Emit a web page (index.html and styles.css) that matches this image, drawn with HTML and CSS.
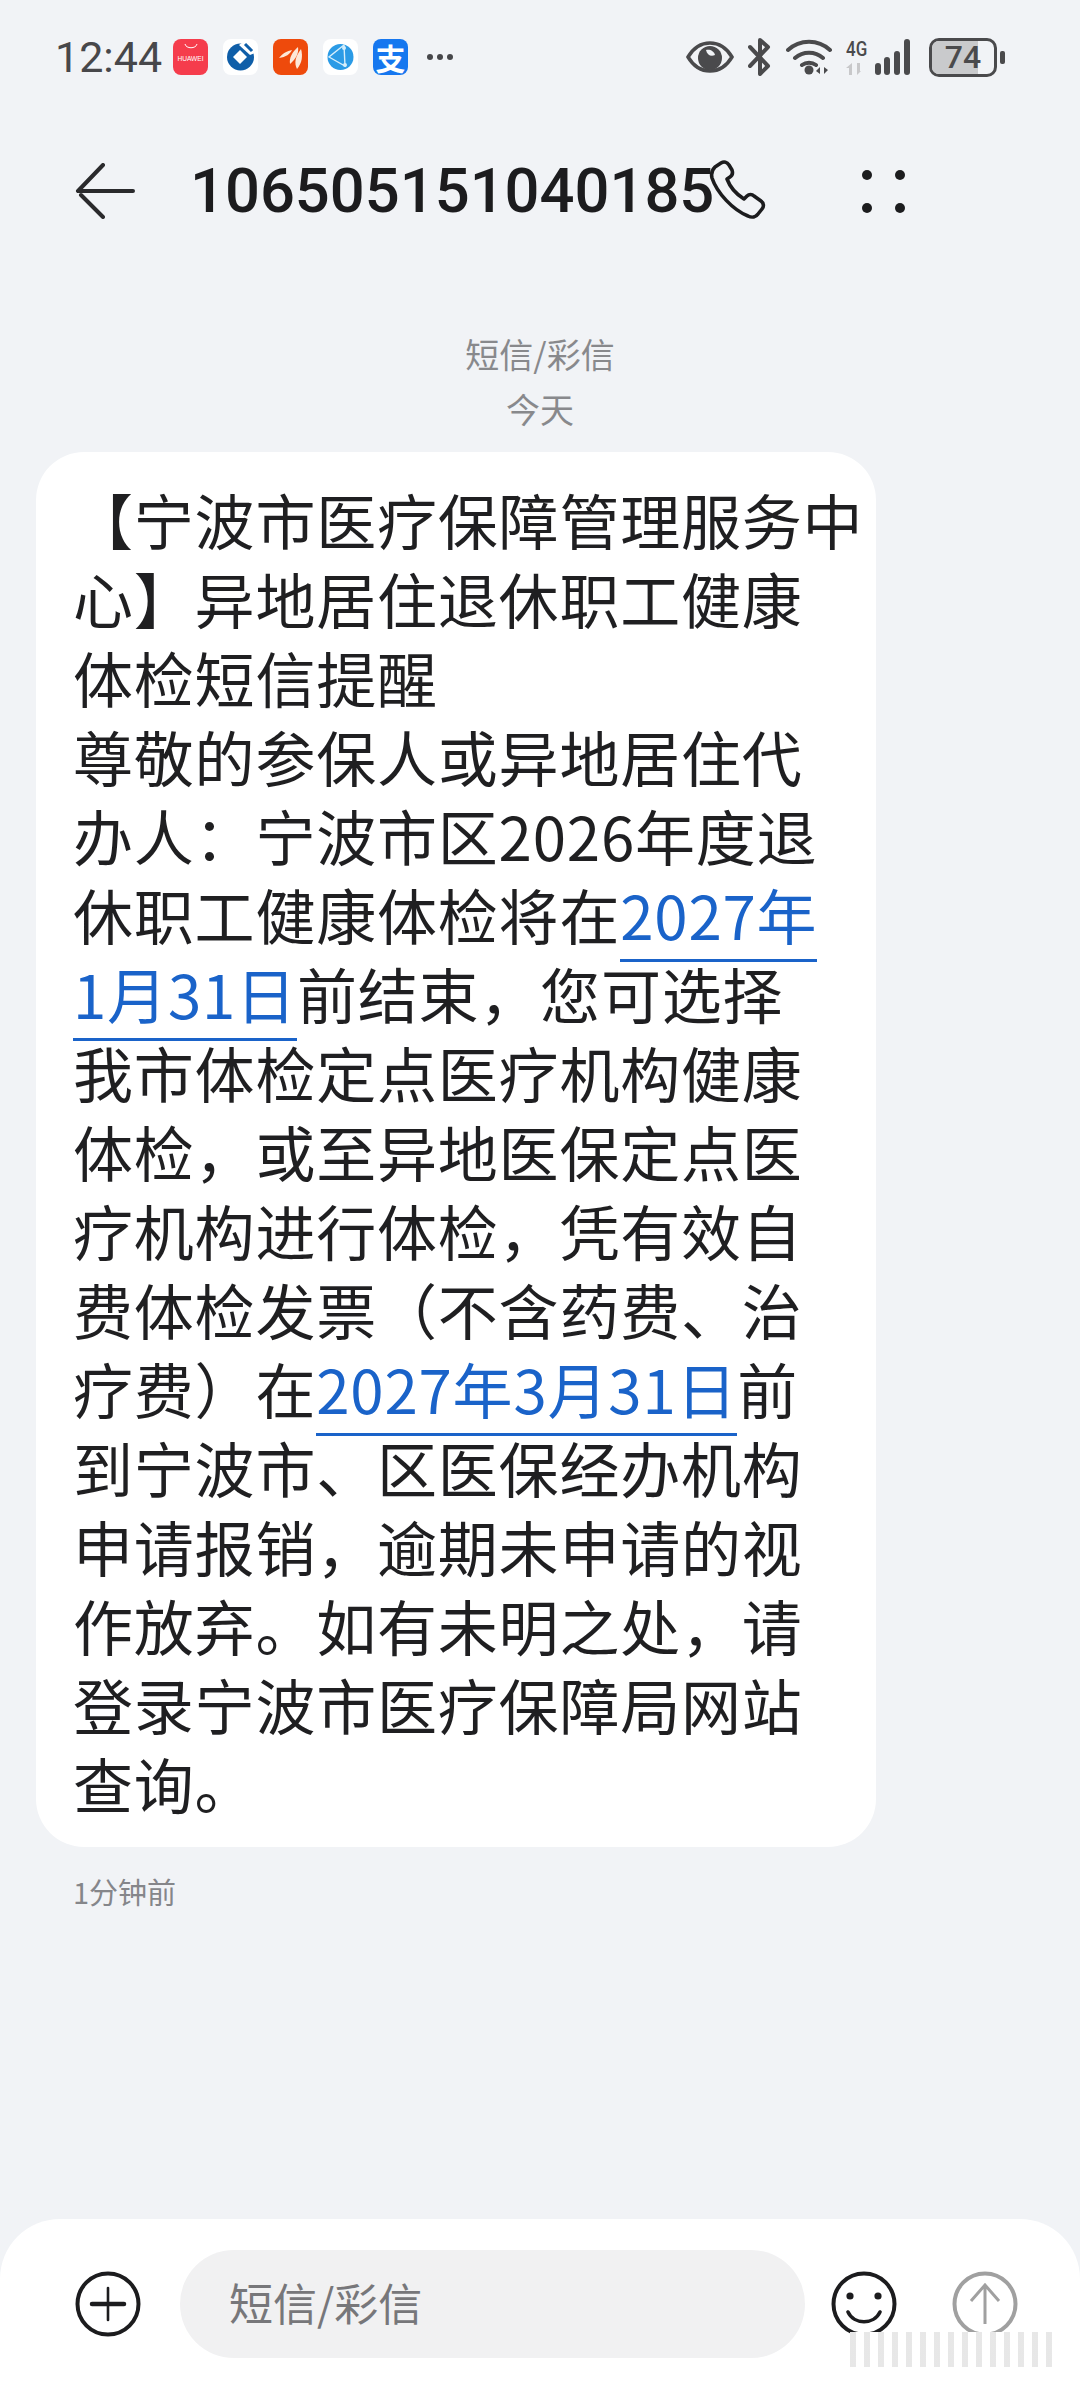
FILE: index.html
```html
<!DOCTYPE html>
<html lang="zh-CN">
<head>
    <meta charset="UTF-8">
    <meta name="viewport" content="width=device-width, initial-scale=1.0">
    <title>短信</title>
    <link rel="stylesheet" href="styles.css">
</head>
<body>

<div class="page">
    <!-- Status bar -->
    <div class="status-bar">
        <div class="status-left">
            <span class="clock">12:44</span>
            <div class="app-icon app-huawei">
                <svg class="huawei-smile" viewBox="0 0 14 6"><path d="M1 1c1 5 11 5 12 0" fill="none" stroke="#fff" stroke-width="1"/></svg>
                <span>HUAWEI</span>
            </div>
            <div class="app-icon app-white">
                <svg viewBox="0 0 35 36" width="35" height="36">
                    <circle cx="17.5" cy="18" r="13.5" fill="#0f5ea8"/>
                    <path d="M17 11l7 7-7 7-7-7z" fill="#fff"/>
                    <path d="M20 3l12 11-5 2-11-10z" fill="#fff"/>
                    <path d="M22 5l7 7" stroke="#0f5ea8" stroke-width="3"/>
                </svg>
            </div>
            <div class="app-icon app-orange">
                <svg viewBox="0 0 35 36" width="35" height="36">
                    <path d="M6 19c4-5 8-7 13-8-2 4-6 7-13 8z" fill="#fde8d8"/>
                    <path d="M17 25c-1-6 2-12 8-17 1 6-2 12-8 17z" fill="#fde8d8"/>
                    <path d="M24 30c-3-6-2-12 4-20 2 7 1 14-4 20z" fill="#fde8d8"/>
                </svg>
            </div>
            <div class="app-icon app-white">
                <svg viewBox="0 0 35 36" width="35" height="36">
                    <circle cx="17.5" cy="18" r="13" fill="#2b9be6"/>
                    <path d="M21 6L6 18l16 9zM21 6l1 21" fill="none" stroke="#d5eefb" stroke-width="1.4"/>
                    <circle cx="21" cy="9" r="2" fill="#d5eefb"/>
                    <circle cx="22" cy="26" r="2" fill="#d5eefb"/>
                </svg>
            </div>
            <div class="app-icon app-alipay">支</div>
            <div class="more-dots"><i></i><i></i><i></i></div>
        </div>
        <div class="status-right">
            <svg width="48" height="34" viewBox="0 0 48 34">
                <path d="M2 17C8 7 15 3 24 3s16 4 22 14c-6 10-13 14-22 14S8 27 2 17z" fill="none" stroke="#4a4a4c" stroke-width="3.5"/>
                <circle cx="24" cy="18" r="12" fill="#4a4a4c"/>
                <path d="M20 10c4-1 8 1 9 5-4 2-8 0-9-5z" fill="#f1f3f6"/>
            </svg>
            <svg width="24" height="38" viewBox="0 0 24 38">
                <path d="M2 9l18 19-8 8V2l8 7L2 28" fill="none" stroke="#4a4a4c" stroke-width="4" stroke-linejoin="round" stroke-linecap="round"/>
            </svg>
            <svg class="wifi" width="46" height="38" viewBox="0 0 46 38">
                <path d="M2 12c12-11 30-11 42 0M9 20c8-7 20-7 28 0M16 27c4-3 10-3 14 0" fill="none" stroke="#4a4a4c" stroke-width="4" stroke-linecap="round"/>
                <circle cx="23" cy="32" r="4.5" fill="#4a4a4c"/>
                <path d="M34 36v-7l-4 4zM38 29v7l4-4z" fill="#4a4a4c"/>
            </svg>
            <div class="cell">
                <span class="cell-type">4G</span>
                <svg width="26" height="12" viewBox="0 0 26 12" class="cell-arrows">
                    <path d="M6 0v12H3V5H0zM11 0v12l4-4h-1V0z" fill="#c8c8ca"/>
                </svg>
            </div>
            <svg class="signal" width="42" height="38" viewBox="0 0 42 38">
                <rect x="1" y="25" width="6" height="12" rx="3"/>
                <rect x="10" y="19" width="6" height="18" rx="3"/>
                <rect x="20" y="13" width="6" height="24" rx="3"/>
                <rect x="30" y="1" width="6" height="36" rx="3"/>
            </svg>
            <div class="battery">
                <div class="battery-body"><div class="battery-fill" style="width: 74%"></div><span>74</span></div>
                <div class="battery-tip"></div>
            </div>
        </div>
    </div>

    <!-- Header -->
    <div class="title-bar">
        <svg class="back-icon" width="60" height="56" viewBox="0 0 60 56">
            <path d="M28 2L3 28h55M6 32l22 22" fill="none" stroke="#2a2a2c" stroke-width="4" stroke-linecap="round" stroke-linejoin="round"/>
        </svg>
        <h1 class="number">106505151040185</h1>
        <svg class="phone-icon" width="60" height="62" viewBox="0 0 60 62">
            <path d="M6 7l6-4c3-2 6-1 8 2l3 5c1 3 1 5-2 7l-3 2c3 8 9 15 17 20l3-3c2-2 5-2 7 0l7 5c3 2 3 6 1 8l-4 5c-2 3-6 4-10 2C24 50 8 33 3 18c-1-4 0-8 3-11z" fill="none" stroke="#1c1c1e" stroke-width="3.6" stroke-linejoin="round"/>
        </svg>
        <div class="menu-dots"><i></i><i></i><i></i><i></i></div>
    </div>

    <div class="thread-head">
        <div>短信/彩信</div>
        <div>今天</div>
    </div>

    <!-- Message -->
    <div class="bubble">【宁波市医疗保障管理服务中<br>心】异地居住退休职工健康<br>体检短信提醒<br>尊敬的参保人或异地居住代<br>办人：宁波市区2026年度退<br>休职工健康体检将在<a class="date-link" href="#">2027年</a><br><a class="date-link" href="#">1月31日</a>前结束，您可选择<br>我市体检定点医疗机构健康<br>体检，或至异地医保定点医<br>疗机构进行体检，凭有效自<br>费体检发票（不含药费、治<br>疗费）在<a class="date-link" href="#">2027年3月31日</a>前<br>到宁波市、区医保经办机构<br>申请报销，逾期未申请的视<br>作放弃。如有未明之处，请<br>登录宁波市医疗保障局网站<br>查询。</div>
    <div class="msg-time">1分钟前</div>

    <!-- Composer -->
    <div class="composer">
        <svg width="66" height="66" viewBox="0 0 66 66">
            <circle cx="33" cy="33" r="30.5" fill="none" stroke="#1c1c1e" stroke-width="4"/>
            <path d="M17 33h32" stroke="#1c1c1e" stroke-width="4.5" stroke-linecap="round"/>
            <path d="M33 17v32" stroke="#1c1c1e" stroke-width="2.6" stroke-linecap="round"/>
        </svg>
        <div class="input-pill">短信/彩信</div>
        <svg class="smile-icon" width="66" height="66" viewBox="0 0 66 66">
            <circle cx="33" cy="33" r="30.5" fill="none" stroke="#1c1c1e" stroke-width="4"/>
            <circle cx="19" cy="25" r="3.6" fill="#1c1c1e"/>
            <circle cx="47" cy="25" r="3.6" fill="#1c1c1e"/>
            <path d="M17 41c6 13 26 13 32 0" fill="none" stroke="#1c1c1e" stroke-width="3.6" stroke-linecap="round"/>
        </svg>
        <svg class="send-icon" width="66" height="66" viewBox="0 0 66 66">
            <circle cx="33" cy="33" r="30.5" fill="none" stroke="#a0a0a0" stroke-width="4"/>
            <path d="M33 53V14M19 30l14-16 14 16" fill="none" stroke="#a0a0a0" stroke-width="3"/>
        </svg>
        <!-- smeared patch in the corner of the shot -->
        <div class="smear"></div>
    </div>
</div>

</body>
</html>
```

FILE: styles.css
```css
/* Global Styles */
* {
    box-sizing: border-box;
}

body {
    margin: 0;
    font-family: 'Noto Sans CJK SC', 'Noto Sans', sans-serif;
    background-color: #f1f3f6;
    color: #1c1c1e;
}

.page {
    width: 1080px;
    height: 2388px;
    display: flex;
    flex-direction: column;
    overflow: hidden;
}

/* Status bar */
.status-bar {
    height: 76px;
    padding: 38px 75px 0 55px;
    display: flex;
    justify-content: space-between;
    align-items: center;
    box-sizing: content-box;
    height: 38px;
}

.status-left,
.status-right {
    display: flex;
    align-items: center;
}

.clock {
    font-family: Roboto, sans-serif;
    font-size: 43px;
    color: #47474a;
    width: 118px;
}

.app-icon {
    width: 35px;
    height: 36px;
    border-radius: 8px;
    margin-right: 15px;
    overflow: hidden;
    display: flex;
    flex-direction: column;
    align-items: center;
    justify-content: center;
    flex-shrink: 0;
}

.app-huawei {
    background-color: #f53c4c;
    color: #fff;
    font-family: 'Liberation Sans', sans-serif;
    font-size: 6.6px;
    justify-content: flex-start;
}

.huawei-smile {
    width: 14px;
    height: 6px;
    margin: 4px 0 6px;
}

.app-white {
    background-color: #fff;
}

.app-orange {
    background-color: #ee4a0c;
}

.app-alipay {
    background-color: #1677ef;
    color: #fff;
    font-size: 30px;
    font-weight: 700;
    line-height: 36px;
}

.more-dots {
    display: flex;
    gap: 4px;
    margin-left: 4px;
}

.more-dots i {
    width: 6px;
    height: 6px;
    border-radius: 50%;
    background-color: #47474a;
}

.status-right svg {
    display: block;
    flex-shrink: 0;
}

.status-right {
    gap: 14px;
}

.cell {
    display: flex;
    flex-direction: column;
    align-items: flex-start;
    margin-right: -14px;
    width: 28px;
}

.cell-type {
    font-family: Roboto, sans-serif;
    font-size: 20px;
    font-weight: 500;
    color: #4a4a4c;
    line-height: 20px;
    transform: scaleX(.85);
    transform-origin: left;
}

.cell-arrows {
    margin-top: 4px;
}

.signal rect {
    fill: #4a4a4c;
}

.battery {
    display: flex;
    align-items: center;
    gap: 3px;
    margin-left: -1px;
}

.battery-body {
    width: 68px;
    height: 39px;
    border: 3px solid #4a4a4c;
    border-radius: 10px;
    position: relative;
    overflow: hidden;
    display: flex;
    align-items: center;
    justify-content: center;
}

.battery-fill {
    position: absolute;
    left: 0;
    top: 0;
    bottom: 0;
    background-color: #c9cacc;
}

.battery-body span {
    position: relative;
    font-family: Roboto, sans-serif;
    font-size: 32px;
    font-weight: 500;
    color: #4a4a4c;
}

.battery-tip {
    width: 5px;
    height: 13px;
    border-radius: 2px;
    background-color: #4a4a4c;
}

/* Header */
.title-bar {
    display: flex;
    align-items: center;
    height: 72px;
    margin-top: 79px;
    padding-left: 75px;
}

.number {
    margin: 0 0 0 55px;
    font-family: Roboto, sans-serif;
    font-size: 61.5px;
    font-weight: 500;
    line-height: 72px;
    width: 600px;
    color: #1c1c1e;
}

.phone-icon {
    flex-shrink: 0;
    margin-left: -81px;
}

.menu-dots {
    display: grid;
    grid-template-columns: 10px 10px;
    gap: 23px;
    margin-left: 93px;
}

.menu-dots i {
    width: 10px;
    height: 10px;
    border-radius: 50%;
    background-color: #1c1c1e;
}

.thread-head {
    margin-top: 99px;
    text-align: center;
    font-size: 34px;
    line-height: 55px;
    color: #88898c;
}

/* Message */
.bubble {
    width: 840px;
    margin: 16px 0 0 36px;
    padding: 27px 0 25px 37px;
    background-color: #fff;
    border-radius: 48px;
    font-size: 60px;
    letter-spacing: .8px;
    line-height: 79px;
    white-space: nowrap;
    color: #1f1f21;
}

.date-link {
    color: #1a63c9;
    text-decoration: none;
    border-bottom: 3px solid #1a63c9;
    padding-bottom: 2px;
}

.msg-time {
    margin: 28px 0 0 73px;
    font-size: 29px;
    line-height: 32px;
    color: #85868a;
}

/* Composer */
.composer {
    position: relative;
    margin-top: auto;
    height: 169px;
    padding: 31px 62px 30px 75px;
    background-color: #fff;
    border-radius: 60px 60px 0 0;
    display: flex;
    align-items: center;
}

.composer svg {
    flex-shrink: 0;
}

.input-pill {
    width: 625px;
    height: 108px;
    margin-left: 39px;
    padding-left: 49px;
    border-radius: 54px;
    background-color: #f1f1f2;
    font-size: 44px;
    line-height: 104px;
    color: #77777a;
}

.smile-icon {
    margin-left: 26px;
}

.send-icon {
    margin-left: 55px;
}

.smear {
    position: absolute;
    left: 850px;
    top: 113px;
    width: 206px;
    height: 35px;
    background:
        linear-gradient(#fff 0 0) 0 0 / 0 0 no-repeat,
        repeating-linear-gradient(90deg, rgba(60,60,60,.12) 0 6px, rgba(255,255,255,0) 6px 14px),
        #fff;
}
```
